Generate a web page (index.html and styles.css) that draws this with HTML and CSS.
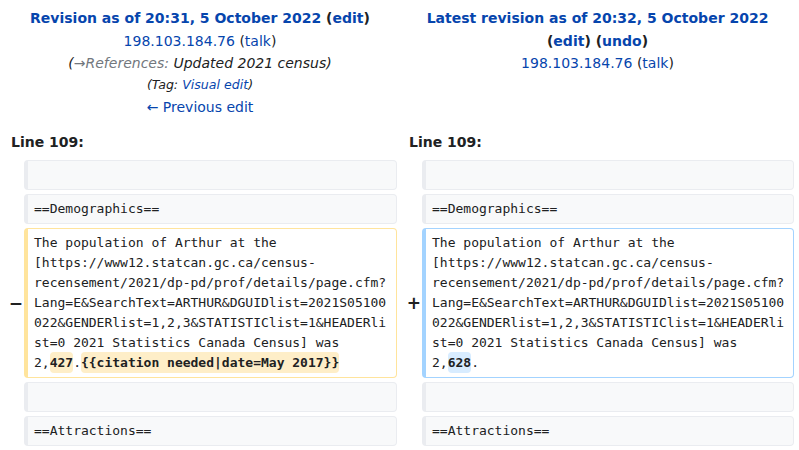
FILE: index.html
```html
<!DOCTYPE html>
<html lang="en">
<head>
<meta charset="utf-8">
<title>Difference between revisions</title>
<link rel="stylesheet" href="styles.css">
</head>
<body>
<div class="diff">
  <div class="title otitle">
    <div class="tline first"><strong><a href="#">Revision as of 20:31, 5 October 2022</a> (<a href="#">edit</a>)</strong></div>
    <div class="tline"><a href="#">198.103.184.76</a> (<a href="#">talk</a>)</div>
    <div class="tline comment">(<span class="autocomment">→References:</span> Updated 2021 census)</div>
    <div class="tline tags">(Tag: <a href="#">Visual edit</a>)</div>
    <div class="tline"><a href="#">← Previous edit</a></div>
  </div>
  <div class="title ntitle">
    <div class="tline first"><strong><a href="#">Latest revision as of 20:32, 5 October 2022</a></strong></div>
    <div class="tline"><strong>(<a href="#">edit</a>) (<a href="#">undo</a>)</strong></div>
    <div class="tline"><a href="#">198.103.184.76</a> (<a href="#">talk</a>)</div>
  </div>

  <div class="lineno">Line 109:</div>
  <div class="lineno">Line 109:</div>

  <div class="marker"></div>
  <div class="cell context"><br></div>
  <div class="marker"></div>
  <div class="cell context"><br></div>

  <div class="marker"></div>
  <div class="cell context">==Demographics==</div>
  <div class="marker"></div>
  <div class="cell context">==Demographics==</div>

  <div class="marker"><span>−</span></div>
  <div class="cell deleted">The population of Arthur at the<br>[https://www12.statcan.gc.ca/census-<br>recensement/2021/dp-pd/prof/details/page.cfm?<br>Lang=E&amp;SearchText=ARTHUR&amp;DGUIDlist=2021S05100<br>022&amp;GENDERlist=1,2,3&amp;STATISTIClist=1&amp;HEADERli<br>st=0 2021 Statistics Canada Census] was<br>2,<del class="change">427</del>.<del class="change">{{citation needed|date=May 2017}}</del></div>
  <div class="marker"><span>+</span></div>
  <div class="cell added">The population of Arthur at the<br>[https://www12.statcan.gc.ca/census-<br>recensement/2021/dp-pd/prof/details/page.cfm?<br>Lang=E&amp;SearchText=ARTHUR&amp;DGUIDlist=2021S05100<br>022&amp;GENDERlist=1,2,3&amp;STATISTIClist=1&amp;HEADERli<br>st=0 2021 Statistics Canada Census] was<br>2,<ins class="change">628</ins>.</div>

  <div class="marker"></div>
  <div class="cell context"><br></div>
  <div class="marker"></div>
  <div class="cell context"><br></div>

  <div class="marker"></div>
  <div class="cell context">==Attractions==</div>
  <div class="marker"></div>
  <div class="cell context">==Attractions==</div>
</div>
</body>
</html>
```

FILE: styles.css
```css
html, body {
  margin: 0;
  padding: 0;
  background: #ffffff;
}

body {
  font-family: "DejaVu Sans", sans-serif;
  font-size: 14px;
  color: #202122;
  overflow: hidden;
}

a {
  color: #0645ad;
  text-decoration: none;
}

.diff {
  display: grid;
  grid-template-columns: 17px 373px 17px 372px;
  column-gap: 4px;
  row-gap: 4px;
  padding: 7px 0 0 3px;
}

.title {
  text-align: center;
  line-height: 22px;
}

.otitle {
  grid-column: 1 / 3;
}

.ntitle {
  grid-column: 3 / 5;
}

.tline.first {
  line-height: 23px;
}

.comment {
  font-style: italic;
}

.autocomment {
  color: #72777d;
}

.tags {
  font-style: italic;
  font-size: 12.6px;
}

.lineno {
  grid-column: span 2;
  font-weight: bold;
  line-height: 22px;
  padding: 9px 0 3px 8px;
}

.marker {
  display: flex;
  align-items: center;
  justify-content: flex-end;
  font-weight: bold;
  font-size: 17px;
  line-height: 20px;
}

.marker span {
  margin-right: -3px;
}

.cell {
  font-family: "DejaVu Sans Mono", monospace;
  font-size: 13px;
  line-height: 20px;
  padding: 4px 6px;
  border-style: solid;
  border-width: 1px 1px 1px 4px;
  border-radius: 4px;
  white-space: nowrap;
}

.context {
  background: #f8f9fa;
  border-color: #eaecf0;
}

.deleted {
  background: #ffffff;
  border-color: #ffe49c;
}

.added {
  background: #ffffff;
  border-color: #a3d3ff;
}

.change {
  font-weight: bold;
  text-decoration: none;
  border-radius: 4px;
  padding: 3px 0;
}

.deleted .change {
  background: #feeec8;
}

.added .change {
  background: #d8ecff;
}
```
